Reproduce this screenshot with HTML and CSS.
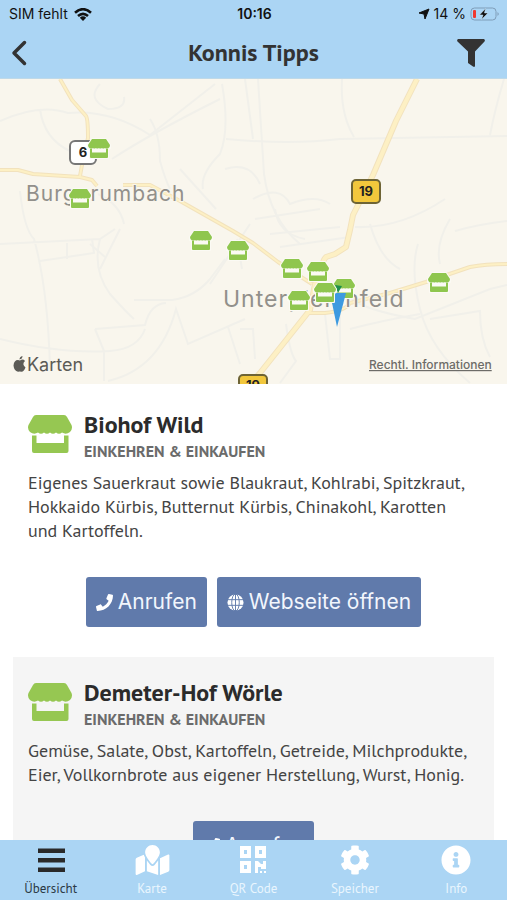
FILE: index.html
```html
<!DOCTYPE html>
<html lang="de">
<head>
<meta charset="utf-8">
<meta name="viewport" content="width=device-width, initial-scale=1">
<title>Konnis Tipps</title>
<link rel="stylesheet" href="styles.css">
</head>
<body>
<svg class="defs" aria-hidden="true">
  <symbol id="store" viewBox="0 0 44 38">
    <path d="M8 0H36Q38 0 39 2L43.500 10Q45 14 42 17Q38 20 34 17.500Q31 20 28 17.500Q25 20 22 17.500Q19 20 16 17.500Q13 20 10 17.500Q6 20 2 17Q-1 14 .5 10L5 2Q6 0 8 0Z"/>
    <path d="M4 20.500H8.500V28H36V20.500H40.500V36Q40.500 38 38.500 38H6Q4 38 4 36Z"/>
  </symbol>
  <symbol id="pin" viewBox="-2 -2 26 23">
    <path fill="#fbfaf4" stroke="#fbfaf4" stroke-width="2" stroke-linejoin="round" d="M4 0H18L22 6V9L20 10V19H2V10L0 9V6Z"/>
    <path fill="#8fc64e" d="M4 0H18L22 6Q22 9 20 9.500Q18 10 17 9Q15 10 14 9Q12 10 11 9Q9 10 8 9Q6 10 5 9Q4 10 2 9.500Q0 9 0 6Z"/>
    <path fill="#8fc64e" d="M2 10H4V13.500H18V10H20V18Q20 19 19 19H3Q2 19 2 18Z"/>
  </symbol>
  <symbol id="phone" viewBox="0 0 512 512">
    <path d="M493.400 24.600l-104-24c-11.300-2.600-22.900 3.300-27.500 13.900l-48 112c-4.200 9.800-1.400 21.300 6.900 28l60.600 49.600c-36 76.700-98.900 140.500-177.200 177.200l-49.600-60.600c-6.800-8.300-18.200-11.100-28-6.900l-112 48C3.900 366.500-2 378.100.6 389.400l24 104C27.100 504.200 36.700 512 48 512c256.100 0 464-207.500 464-464 0-11.200-7.700-20.900-18.600-23.400z"/>
  </symbol>
  <symbol id="globe" viewBox="0 0 18 18">
    <circle cx="9" cy="9" r="8.500"/>
    <g class="cut"><path d="M0 6H18M0 12H18M9 0V18"/><ellipse cx="9" cy="9" rx="4" ry="9"/></g>
  </symbol>
</svg>

<div class="app">
  <header class="top">
    <div class="status">
      <div class="status-left">
        <span>SIM fehlt</span>
        <svg class="wifi" viewBox="0 0 18 13" aria-hidden="true"><g fill="none" stroke="#111" stroke-width="2.600"><path d="M1 4.800Q9-2.400 17 4.800"/><path d="M4 8Q9 3.600 14 8"/></g><path fill="#111" d="M5.800 9.700Q9 7 12.200 9.700L9 13Z"/></svg>
      </div>
      <time class="clock">10:16</time>
      <div class="status-right">
        <svg class="arrow" viewBox="0 0 12 12" aria-hidden="true"><path fill="#111" stroke="#111" stroke-linejoin="round" d="M11 1L7 11L6 6L1 5Z"/></svg>
        <span>14 %</span>
        <svg class="battery" viewBox="0 0 30 14" aria-hidden="true"><rect x="1" y="1" width="25" height="12" rx="3.500" fill="none" stroke="#7f9db8"/><path fill="#7f9db8" d="M27.500 5Q30 7 27.500 9Z"/><rect x="3" y="3" width="3" height="8" rx="1" fill="#f0392f"/><path fill="#111" stroke="#d5eafa" stroke-width=".5" d="M15.500 1.500L9.500 8H13L11.500 12.500L18 6H14.500Z"/></svg>
      </div>
    </div>
    <div class="title-row">
      <button class="icon-button" type="button" aria-label="Zurück"><svg class="back" viewBox="0 0 16 26"><path d="M13.500 2.500L3 13L13.500 23.500" fill="none" stroke="#333" stroke-width="3.500" stroke-linecap="round" stroke-linejoin="round"/></svg></button>
      <h1>Konnis Tipps</h1>
      <button class="icon-button end" type="button" aria-label="Filter"><svg class="filter" viewBox="0 0 28 28"><path fill="#333" d="M1 0H27Q28.500 1 27.500 2.500L18 12.500V27Q17.500 28.500 16 27.500L11 24V12.500L.5 2.500Q-.5 1 1 0Z"/></svg></button>
    </div>
  </header>

  <main>
    <svg class="map" viewBox="0 0 507 305" role="img" aria-label="Karte mit Tipps">
      <rect width="507" height="305" fill="#f9f6ed"/>
      <g class="lane">
        <path d="M0 42Q40 24 68 34Q110 30 150 56L215 5M40 30Q44 60 70 72M100 5Q86 20 108 30Q126 30 124 18M112 80Q150 55 220 20M150 40Q160 55 160 82Q165 100 170 110M222 5Q230 50 220 75Q200 95 203 110"/>
        <path d="M258 0Q262 60 264 95Q270 140 300 165M226 60Q290 66 340 60L507 57M342 0Q340 35 354 58M504 0Q495 30 490 56"/>
        <path d="M20 112Q24 150 34 160Q48 210 50 290M0 165L100 160L115 150M40 182L94 174L92 160M67 164V180M100 160Q92 190 110 215Q128 235 134 240M100 190L120 150M134 221H172Q195 218 210 200L225 180M95 250L145 246Q150 225 166 224M95 250L104 272V302M0 260Q60 275 110 272Q138 270 145 250M108 302Q160 290 176 230L188 265L245 240M228 248L240 285M240 250H253L255 280"/>
        <path d="M253 120Q280 105 290 125Q315 115 330 125M275 130Q278 155 305 160M255 140L320 130M270 155L340 148M280 168L350 158M355 148Q400 150 445 120M455 152Q480 145 507 142M350 218Q360 230 415 240L490 210L507 206M418 165Q410 190 420 230Q430 270 470 304M430 240L480 232Q480 260 490 278M325 235L330 280H340V235M286 245Q290 275 296 282L280 304M350 250Q380 242 420 235"/>
        <path d="M124 145Q120 125 98 115M90 165L105 178M210 205L250 145M237 160L242 190M180 90L216 130M225 90Q250 82 260 105M245 0L253 60M370 145Q380 180 400 190M440 185Q435 165 450 140"/>
      </g>
      <g class="road-edge">
        <path d="M60 0L72 21L86 37Q88 40 88 59L82 86L80 97M0 91H18L33 95L80 98L92 101L97 107M123 106H150L180 122L233 152L253 164L278 183L312 205"/>
        <path d="M390 214L426 203L470 188Q485 185 507 185M306 234H325Q345 232 350 224L390 214"/>
      </g>
      <path class="road-edge wide" d="M417 0L396 42L373 96L353 136L350 151L346 168L335 175L326 178Q322 182 323 188L315 205L310 231L260 294L250 305"/>
      <g class="road">
        <path d="M60 0L72 21L86 37Q88 40 88 59L82 86L80 97M0 91H18L33 95L80 98L92 101L97 107M123 106H150L180 122L233 152L253 164L278 183L312 205"/>
        <path d="M390 214L426 203L470 188Q485 185 507 185M306 234H325Q345 232 350 224L390 214"/>
      </g>
      <path class="road wide" d="M417 0L396 42L373 96L353 136L350 151L346 168L335 175L326 178Q322 182 323 188L315 205L310 231L260 294L250 305"/>

      <g class="place"><text x="26" y="122">Burggrumbach</text><text class="town" x="223" y="228">Unterpleichfeld</text></g>

      <g class="shield"><rect x="70" y="62" width="26" height="23" rx="5" fill="#fff" stroke="#777"/><text x="83" y="78">6</text></g>
      <g class="shield"><rect x="352" y="101" width="28" height="23" rx="4" fill="#f2c73c" stroke="#6e6435"/><text x="366" y="117">19</text></g>
      <g class="shield"><rect x="239" y="296" width="28" height="23" rx="4" fill="#f2c73c" stroke="#6e6435"/><text x="253" y="311">19</text></g>

      <use href="#pin" x="86" y="58" width="26" height="23"/>
      <use href="#pin" x="67" y="108" width="26" height="23"/>
      <use href="#pin" x="188" y="150" width="26" height="23"/>
      <use href="#pin" x="225" y="160" width="26" height="23"/>
      <use href="#pin" x="279" y="178" width="26" height="23"/>
      <use href="#pin" x="305" y="181" width="26" height="23"/>
      <use href="#pin" x="331" y="198" width="26" height="23"/>
      <path fill="#1f8f4a" d="M335 206L342 207L338 214Z"/>
      <path fill="#3d9ae0" d="M330 214H346L337 248Z"/>
      <use href="#pin" x="312" y="202" width="26" height="23"/>
      <use href="#pin" x="286" y="210" width="26" height="23"/>
      <use href="#pin" x="426" y="192" width="26" height="23"/>

      <path fill="#5c5b56" d="M20 281.500Q23 279.500 25 282Q21.500 285 25.500 288.500Q23.500 293 21.500 292.800Q19.500 292 18 292.800Q14 292 13.500 286.500Q14 281 18 281ZM19.500 280.500Q19.500 277.500 22.500 277Q22.500 280 19.500 280.500Z"/>
      <text class="brand" x="27" y="292">Karten</text>
      <a href="#legal"><text class="legal" x="369" y="290">Rechtl. Informationen</text></a>
    </svg>

    <div class="list">
      <article class="card">
        <div class="card-head">
          <svg class="store" aria-hidden="true"><use href="#store"/></svg>
          <div><h2>Biohof Wild</h2><p class="category">EINKEHREN &amp; EINKAUFEN</p></div>
        </div>
        <p class="text">Eigenes Sauerkraut sowie Blaukraut, Kohlrabi, Spitzkraut, Hokkaido Kürbis, Butternut Kürbis, Chinakohl, Karotten und Kartoffeln.</p>
        <div class="actions">
          <button class="action" type="button"><svg aria-hidden="true"><use href="#phone"/></svg>Anrufen</button>
          <button class="action" type="button"><svg aria-hidden="true"><use href="#globe"/></svg>Webseite öffnen</button>
        </div>
      </article>
      <article class="card shaded">
        <div class="card-head">
          <svg class="store" aria-hidden="true"><use href="#store"/></svg>
          <div><h2>Demeter-Hof Wörle</h2><p class="category">EINKEHREN &amp; EINKAUFEN</p></div>
        </div>
        <p class="text">Gemüse, Salate, Obst, Kartoffeln, Getreide, Milchprodukte, Eier, Vollkornbrote aus eigener Herstellung, Wurst, Honig.</p>
        <div class="actions">
          <button class="action" type="button"><svg aria-hidden="true"><use href="#phone"/></svg>Anrufen</button>
        </div>
      </article>
    </div>
  </main>

  <nav class="tabs">
    <a class="tab active" href="#uebersicht"><svg viewBox="0 0 30 30" aria-hidden="true"><path d="M2 3.500H29V8H2ZM2 13H29V17.500H2ZM2 22.500H29V27H2Z"/></svg>Übersicht</a>
    <a class="tab" href="#karte"><svg class="map-icon" viewBox="0 0 576 512" aria-hidden="true"><path d="M288 0c-69.600 0-126 56.400-126 126 0 56.300 82.400 158.800 113.900 196 6.400 7.500 17.800 7.500 24.200 0C331.700 284.800 414 182.300 414 126 414 56.400 357.600 0 288 0zM20.100 216A32 32 0 0 0 0 245.700v250.300c0 11.300 11.400 19.100 21.900 14.900L160 448V214.900c-8.800-16-16.100-31.500-21.300-46.400L20.100 216zM288 359.700c-14.100 0-27.400-6.200-36.500-17C231.800 319.500 211 292.600 192 265.500v182.500l192 64V265.500c-19 27-39.800 54-59.500 77.200-9.100 10.800-22.400 17-36.500 17zM554.100 161.200L416 224v288l139.900-56A32 32 0 0 0 576 426.300V176c0-11.300-11.400-19.100-21.900-14.800z"/></svg>Karte</a>
    <a class="tab" href="#qr"><svg viewBox="0 0 30 30" aria-hidden="true"><path fill-rule="evenodd" d="M2 1H13V13H2ZM6 5V9H9V5ZM17 1H28V13H17ZM21 5V9H24V5ZM2 16H13V28H2ZM6 20V24H9V20ZM17 16H20L23 19H25V16H28V24H23V22H20V28H17ZM22 26H24V28H22ZM26 26H28V28H26Z"/></svg>QR Code</a>
    <a class="tab" href="#speicher"><svg viewBox="0 0 512 512" aria-hidden="true"><path d="M487.400 315.700l-42.600-24.600c4.300-23.200 4.300-47 0-70.200l42.600-24.600c4.900-2.800 7.100-8.600 5.500-14-11.100-35.600-30-67.800-54.700-94.600-3.800-4.100-10-5.100-14.800-2.300L380.800 110c-17.900-15.400-38.500-27.300-60.800-35.100V25.800c0-5.600-3.900-10.500-9.400-11.700-36.700-8.200-74.300-7.800-109.200 0-5.500 1.200-9.400 6.100-9.400 11.700V75c-22.200 7.900-42.800 19.800-60.800 35.100L88.700 85.500c-4.900-2.800-11-1.900-14.800 2.300-24.700 26.700-43.600 58.900-54.700 94.600-1.700 5.400.6 11.200 5.500 14L67.300 221c-4.300 23.200-4.300 47 0 70.200l-42.600 24.600c-4.900 2.800-7.100 8.600-5.500 14 11.100 35.600 30 67.800 54.700 94.600 3.800 4.100 10 5.100 14.800 2.300l42.600-24.600c17.900 15.400 38.500 27.300 60.800 35.100v49.200c0 5.600 3.900 10.500 9.400 11.700 36.700 8.200 74.300 7.800 109.200 0 5.500-1.200 9.400-6.100 9.400-11.700v-49.200c22.200-7.900 42.800-19.800 60.800-35.100l42.600 24.600c4.900 2.800 11 1.900 14.800-2.300 24.700-26.700 43.600-58.900 54.700-94.600 1.500-5.500-.7-11.300-5.600-14.100zM256 336c-44.100 0-80-35.900-80-80s35.900-80 80-80 80 35.900 80 80-35.900 80-80 80z"/></svg>Speicher</a>
    <a class="tab" href="#info"><svg viewBox="0 0 512 512" aria-hidden="true"><path d="M256 8C119 8 8 119.100 8 256c0 137 111 248 248 248s248-111 248-248C504 119.100 393 8 256 8zm0 110c23.200 0 42 18.800 42 42s-18.800 42-42 42-42-18.800-42-42 18.800-42 42-42zm56 254c0 6.600-5.400 12-12 12h-88c-6.600 0-12-5.400-12-12v-24c0-6.600 5.400-12 12-12h12v-64h-12c-6.600 0-12-5.400-12-12v-24c0-6.600 5.400-12 12-12h64c6.600 0 12 5.400 12 12v100h12c6.600 0 12 5.400 12 12v24z"/></svg>Info</a>
  </nav>
</div>
</body>
</html>
```
FILE: styles.css
```css
* { box-sizing: border-box; }

body {
  margin: 0;
  background: #fff;
  color: #333;
  font-family: "PT Sans", "Noto Sans", sans-serif;
}

h1, h2, p { margin: 0; }
button { border: 0; padding: 0; background: none; font: inherit; cursor: pointer; }
a { text-decoration: none; }
svg { display: block; flex: none; }
.defs { position: absolute; width: 0; height: 0; }

.app {
  display: grid;
  grid-template-rows: auto minmax(0, 1fr) auto;
  height: 100vh;
}

.top { background: #abd5f4; border-bottom: 1px solid #bfd9e8; }

.status {
  display: grid;
  grid-template-columns: 1fr auto 1fr;
  align-items: center;
  height: 28px;
  padding: 0 7px 0 9px;
  color: #111;
  font: 14px/20px Inter, sans-serif;
}
.status-left, .status-right { display: flex; align-items: center; gap: 6px; }
.status-right { justify-content: flex-end; gap: 4px; }
.clock { font-weight: 600; }
.wifi { width: 18px; height: 13px; }
.arrow { width: 12px; height: 12px; }
.battery { width: 30px; height: 14px; }

.title-row {
  display: grid;
  grid-template-columns: 1fr auto 1fr;
  align-items: center;
  height: 50px;
  padding: 0 22px 0 11px;
}
.title-row h1 { padding-left: 11px; font-size: 24px; line-height: 32px; }
.icon-button { justify-self: start; }
.icon-button.end { justify-self: end; }
.back { width: 16px; height: 26px; }
.filter { width: 28px; height: 28px; }

main { overflow-y: auto; scrollbar-width: none; }

.map { width: 100%; height: auto; font-family: Inter, sans-serif; }
.lane { fill: none; stroke: #f1f0ea; stroke-width: 2; }
.road-edge { fill: none; stroke: #f2e2bd; stroke-width: 4; stroke-linejoin: round; }
.road { fill: none; stroke: #fdf0c4; stroke-width: 2; stroke-linejoin: round; }
.road-edge.wide { stroke-width: 6; }
.road.wide { stroke-width: 4; }
.place { fill: #92908b; font-size: 21px; letter-spacing: 1px; stroke: #f9f6ed; stroke-width: 2px; paint-order: stroke; }
.town { font-size: 23px; }
.shield rect { stroke-width: 2px; }
.shield text { fill: #222; font-size: 13px; font-weight: 700; text-anchor: middle; }
.brand { fill: #5c5b56; font-size: 18px; }
.legal { fill: #6d6c68; font-size: 12px; font-weight: 500; text-decoration: underline; }

.list { padding: 5px 13px 0; }
.card { padding: 22px 15px 30px; }
.shaded { background: #f5f5f5; }
.card-head { display: flex; align-items: flex-start; gap: 12px; }
.store { width: 44px; height: 38px; margin-top: 4px; fill: #96c752; }
.card h2 { color: #2b2b2b; font-size: 24px; line-height: 28px; }
.category { color: #6b6b6b; font-size: 16px; font-weight: 700; line-height: 24px; }
.text { margin-top: 8px; color: #444; font-size: 18px; line-height: 24px; }

.actions { display: flex; justify-content: center; gap: 10px; margin-top: 34px; }
.action {
  display: flex;
  align-items: center;
  gap: 5px;
  height: 50px;
  padding: 0 10px;
  border-radius: 3px;
  background: #607aab;
  color: #f2f6fd;
  font: 21px/26px Inter, sans-serif;
}
.action svg { width: 17px; height: 17px; fill: #fff; }
.cut { fill: none; stroke: #607aab; stroke-width: 1px; }

.tabs { display: grid; grid-template-columns: repeat(5, 1fr); height: 60px; background: #abd5f4; }
.tab {
  display: flex;
  flex-direction: column;
  align-items: center;
  gap: 4px;
  padding-top: 5px;
  color: #e9f5fe;
  font-size: 13px;
  line-height: 20px;
}
.tab svg { width: 30px; height: 30px; fill: #fff; }
.tab .map-icon { width: 35px; }
.tab.active { color: #2b3a45; }
.tab.active svg { fill: #2a2a2a; }
```
